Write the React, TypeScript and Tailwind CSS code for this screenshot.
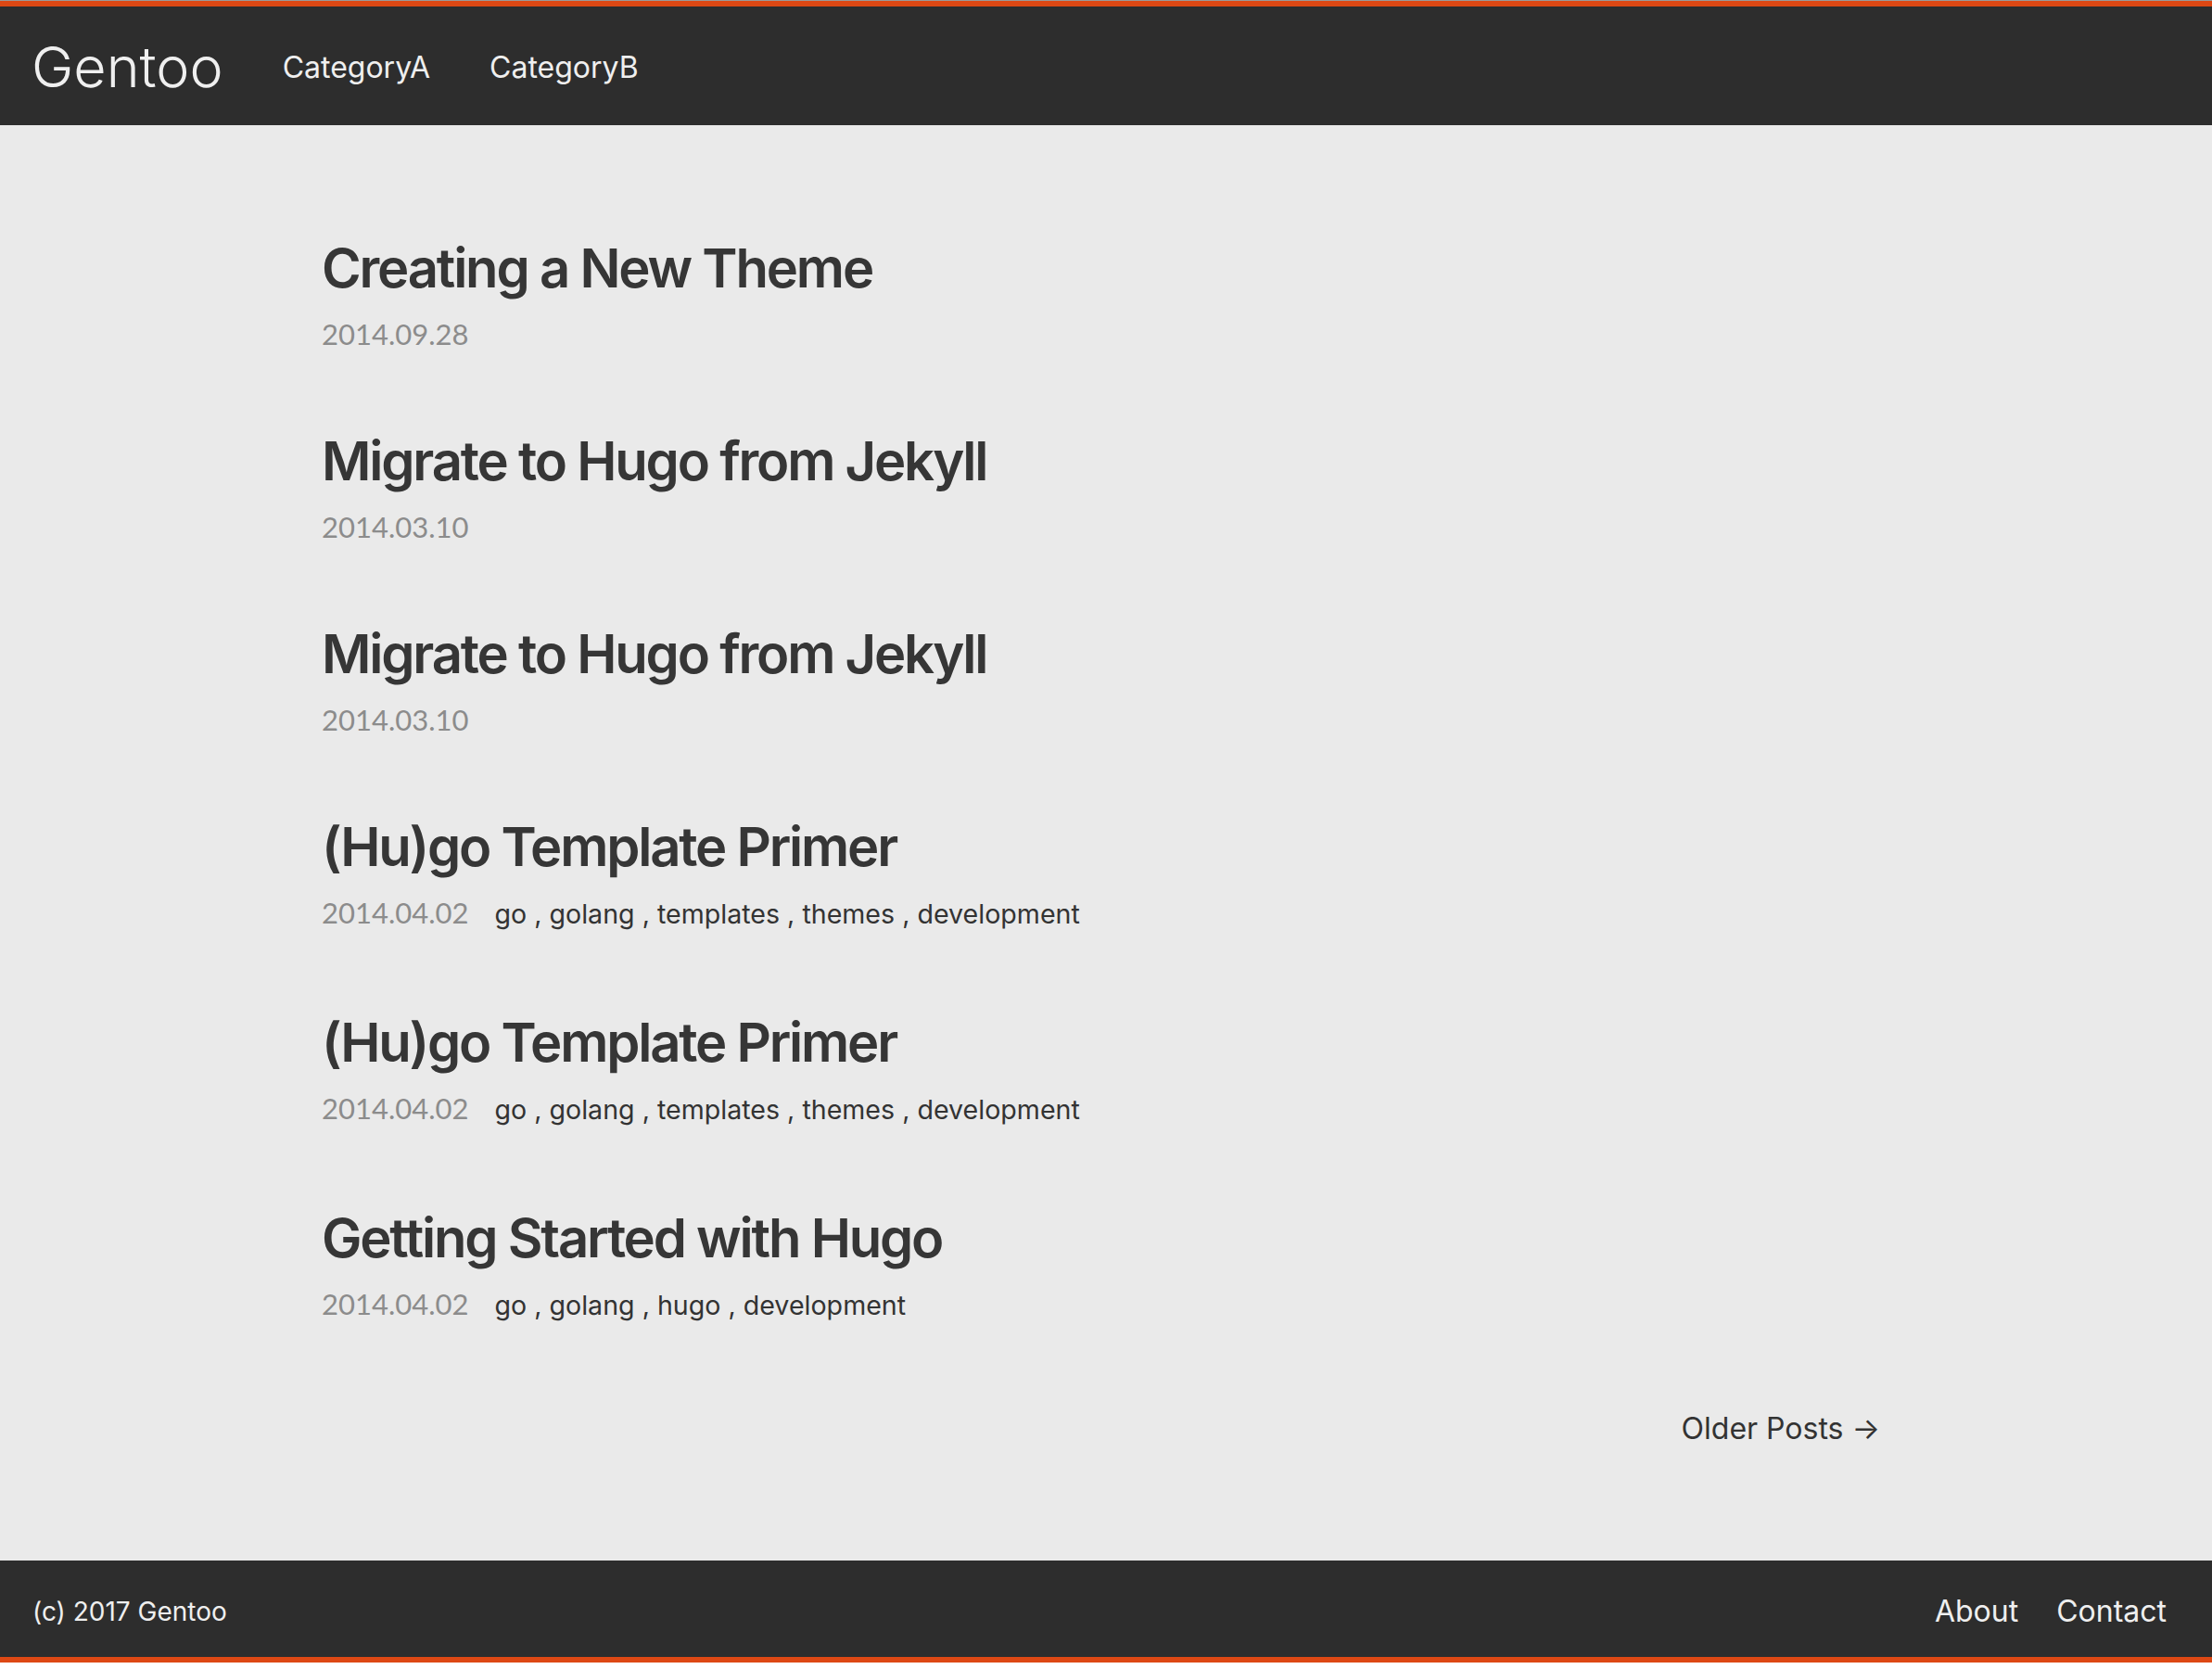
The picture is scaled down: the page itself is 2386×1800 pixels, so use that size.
import React from "react";

type Post = { title: string; date: string; tags?: string[] };

const posts: Post[] = [
  { title: "Creating a New Theme", date: "2014.09.28" },
  { title: "Migrate to Hugo from Jekyll", date: "2014.03.10" },
  { title: "Migrate to Hugo from Jekyll", date: "2014.03.10" },
  { title: "(Hu)go Template Primer", date: "2014.04.02", tags: ["go", "golang", "templates", "themes", "development"] },
  { title: "(Hu)go Template Primer", date: "2014.04.02", tags: ["go", "golang", "templates", "themes", "development"] },
  { title: "Getting Started with Hugo", date: "2014.04.02", tags: ["go", "golang", "hugo", "development"] },
];

export default function App() {
  return (
    <div className="bg-[#eaeaea] font-['Inter','Liberation_Sans',sans-serif]">
      <div className="h-[1px] bg-[#9a9a9a]" />
      <header className="h-[134px] border-t-[6px] border-[#dd4814] bg-[#2d2d2d] flex items-center pl-[34px] pt-[3px]">
        <a className="text-[61px] font-light leading-none text-[#efefef]">Gentoo</a>
        <nav className="flex items-center gap-[64px] ml-[64px] text-[32px] leading-none text-[#efefef]">
          <a>CategoryA</a>
          <a>CategoryB</a>
        </nav>
      </header>
      <main className="w-[1692px] mx-auto pt-[119px] pb-[118px]">
        {posts.map((p, i) => (
          <article key={i} className="mb-[79px]">
            <h2 className="text-[58px] leading-[70px] font-semibold text-[#363636] tracking-[-2.2px]">{p.title}</h2>
            <div className="mt-[14px] flex items-baseline">
              <span className="font-['Lato','Liberation_Sans',sans-serif] text-[31px] leading-[45px] text-[#8c8c8c]">{p.date}</span>
              {p.tags && (
                <span className="ml-[28px] text-[28.6px] leading-[48px] text-[#333333]">
                  {p.tags.map((t, j) => (
                    <React.Fragment key={j}>
                      <a>{t}</a>
                      {j < p.tags!.length - 1 && <span> , </span>}
                    </React.Fragment>
                  ))}
                </span>
              )}
            </div>
          </article>
        ))}
        <div className="-mt-[73px] pt-[79px] flex justify-end pr-[11px]">
          <a className="text-[32px] leading-[48px] text-[#333333]">Older Posts →</a>
        </div>
      </main>
      <footer className="h-[110px] border-b-[6px] border-[#dd4814] bg-[#2d2d2d] flex items-center justify-between pl-[35px] pr-[49px] pt-[5px] text-[#efefef]">
        <span className="text-[28px] leading-none">(c) 2017 Gentoo</span>
        <nav className="flex items-center gap-[41px] text-[32px] leading-none">
          <a>About</a>
          <a>Contact</a>
        </nav>
      </footer>
    </div>
  );
}
